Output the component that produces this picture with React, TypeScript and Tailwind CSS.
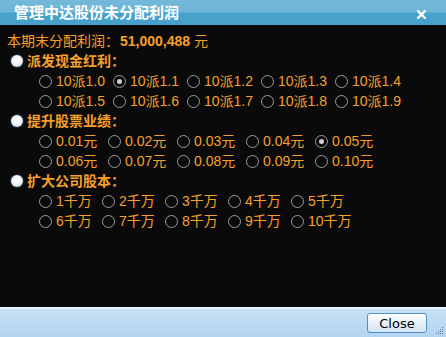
import React from 'react';

const FONT = '"Liberation Sans", "Noto Sans CJK SC", sans-serif';

type Group = {
  title: string;
  colWidth: string;
  rows: string[][];
  checked?: string;
};

const groups: Group[] = [
  {
    title: '派发现金红利：',
    colWidth: 'w-[74px]',
    rows: [
      ['10派1.0', '10派1.1', '10派1.2', '10派1.3', '10派1.4'],
      ['10派1.5', '10派1.6', '10派1.7', '10派1.8', '10派1.9'],
    ],
    checked: '10派1.1',
  },
  {
    title: '提升股票业绩：',
    colWidth: 'w-[69px]',
    rows: [
      ['0.01元', '0.02元', '0.03元', '0.04元', '0.05元'],
      ['0.06元', '0.07元', '0.08元', '0.09元', '0.10元'],
    ],
    checked: '0.05元',
  },
  {
    title: '扩大公司股本：',
    colWidth: 'w-[63px]',
    rows: [
      ['1千万', '2千万', '3千万', '4千万', '5千万'],
      ['6千万', '7千万', '8千万', '9千万', '10千万'],
    ],
  },
];

const SmallRadio = ({ checked }: { checked?: boolean }) => (
  <span className="w-[13px] h-[13px] rounded-full border border-[#9c9c9c] bg-[#0a0a0a] flex items-center justify-center shrink-0">
    {checked && <span className="w-[5px] h-[5px] rounded-full bg-[#d0d0d0]" />}
  </span>
);

const BigRadio = () => (
  <span className="w-[12px] h-[12px] rounded-full bg-[radial-gradient(circle_at_45%_40%,#ffffff_0%,#f4f7fa_45%,#b9cfe2_85%,#7ea6c8_100%)] shadow-[0_0_2px_#4f8fd0] shrink-0" />
);

export default function App() {
  return (
    <div className="w-[446px] h-[337px] flex flex-col bg-[#0a0a0a] overflow-hidden" style={{ fontFamily: FONT }}>
      {/* title bar */}
      <div className="h-[25px] relative flex items-center px-[14px] bg-[linear-gradient(#74b9d9_0%,#6db4d6_48%,#49a2cb_52%,#45a0ca_100%)]">
        <span className="text-white font-bold text-[15px] leading-none">管理中达股份未分配利润</span>
        <svg className="absolute left-[417px] top-[10px]" width="9" height="9" viewBox="0 0 9 9">
          <path d="M1 1 L8 8 M8 1 L1 8" stroke="#fff" strokeWidth="2.4" strokeLinecap="square" />
        </svg>
      </div>

      {/* content */}
      <div className="flex-1 pt-[6px] text-[#f6a02a] text-[14px]">
        <div className="h-[20px] flex items-center pl-[7px]">
          <span>本期末分配利润：</span>
          <span className="font-bold ml-[1px]">51,000,488</span>
          <span className="ml-[4px]">元</span>
        </div>

        {groups.map((g) => (
          <div key={g.title}>
            <div className="h-[20px] flex items-center pl-[11px] gap-[4px]">
              <BigRadio />
              <span className="font-bold">{g.title}</span>
            </div>
            {g.rows.map((row, i) => (
              <div key={i} className="h-[20px] flex items-center pl-[39px]">
                {row.map((opt) => (
                  <div key={opt} className={`${g.colWidth} flex items-center gap-[4px] shrink-0`}>
                    <SmallRadio checked={g.checked === opt} />
                    <span className="whitespace-nowrap">{opt}</span>
                  </div>
                ))}
              </div>
            ))}
          </div>
        ))}
      </div>

      {/* footer */}
      <div className="h-[30px] border-t-2 border-[#eef6fc] bg-[linear-gradient(#c6e0f3,#b3d4ef)] relative flex items-center justify-end pr-[19px]">
        <button
          className="w-[60px] h-[20px] rounded-[3px] border border-[#4f8ec6] bg-[linear-gradient(#ffffff,#e6f0f9_50%,#d3e5f5)] text-[13px] text-black leading-none"
          style={{ fontFamily: '"DejaVu Sans", sans-serif' }}
        >
          Close
        </button>
        <svg className="absolute right-[2px] bottom-[2px]" width="8" height="8" viewBox="0 0 8 8">
          <g fill="#5a7fa0">
            <rect x="6" y="0" width="1" height="1" />
            <rect x="4" y="2" width="1" height="1" />
            <rect x="6" y="2" width="1" height="1" />
            <rect x="2" y="4" width="1" height="1" />
            <rect x="4" y="4" width="1" height="1" />
            <rect x="6" y="4" width="1" height="1" />
            <rect x="0" y="6" width="1" height="1" />
            <rect x="2" y="6" width="1" height="1" />
            <rect x="4" y="6" width="1" height="1" />
            <rect x="6" y="6" width="1" height="1" />
          </g>
        </svg>
      </div>
    </div>
  );
}
